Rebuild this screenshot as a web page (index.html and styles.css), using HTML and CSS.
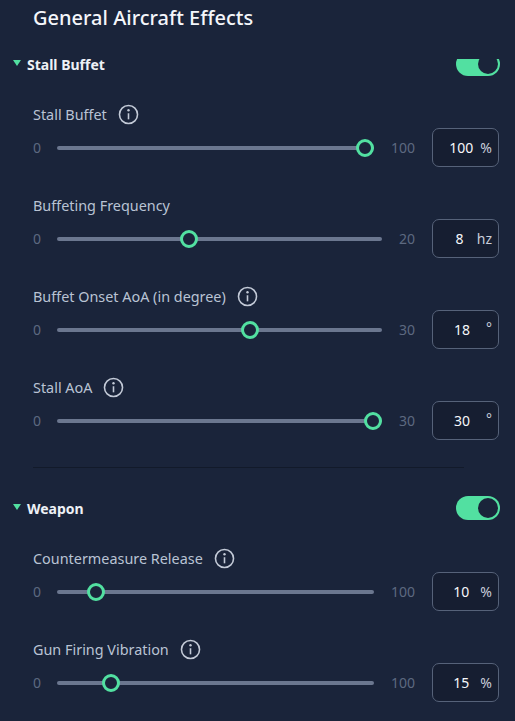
FILE: index.html
```html
<!DOCTYPE html>
<html>

<head>
    <title>General Aircraft Effects</title>
    <link rel="stylesheet" href="styles.css">
</head>

<body>
    <header class="title-bar">
        <h1>General Aircraft Effects</h1>
    </header>

    <main class="panel">
        <section class="group group-scrolled">
            <div class="group-head">
                <span class="caret"></span>
                <span class="group-name">Stall Buffet</span>
                <span class="toggle"><span class="knob"></span></span>
            </div>

            <div class="setting">
                <div class="setting-label">Stall Buffet
                    <svg class="info" viewBox="0 0 20 20"><circle cx="10" cy="10" r="8.6"/><line x1="10" y1="8.8" x2="10" y2="14.6"/><circle class="dot" cx="10" cy="5.9" r="1.15"/></svg>
                </div>
                <div class="setting-control">
                    <span class="bound">0</span>
                    <input class="slider" type="range" min="0" max="100" value="100">
                    <span class="bound">100</span>
                    <div class="value-box"><span class="value">100</span><span class="unit">%</span></div>
                </div>
            </div>

            <div class="setting">
                <div class="setting-label">Buffeting Frequency</div>
                <div class="setting-control">
                    <span class="bound">0</span>
                    <input class="slider" type="range" min="0" max="20" value="8">
                    <span class="bound">20</span>
                    <div class="value-box"><span class="value">8</span><span class="unit">hz</span></div>
                </div>
            </div>

            <div class="setting">
                <div class="setting-label">Buffet Onset AoA (in degree)
                    <svg class="info" viewBox="0 0 20 20"><circle cx="10" cy="10" r="8.6"/><line x1="10" y1="8.8" x2="10" y2="14.6"/><circle class="dot" cx="10" cy="5.9" r="1.15"/></svg>
                </div>
                <div class="setting-control">
                    <span class="bound">0</span>
                    <input class="slider" type="range" min="0" max="30" value="18">
                    <span class="bound">30</span>
                    <div class="value-box"><span class="value">18</span><span class="unit deg">°</span></div>
                </div>
            </div>

            <div class="setting">
                <div class="setting-label">Stall AoA
                    <svg class="info" viewBox="0 0 20 20"><circle cx="10" cy="10" r="8.6"/><line x1="10" y1="8.8" x2="10" y2="14.6"/><circle class="dot" cx="10" cy="5.9" r="1.15"/></svg>
                </div>
                <div class="setting-control">
                    <span class="bound">0</span>
                    <input class="slider" type="range" min="0" max="30" value="30">
                    <span class="bound">30</span>
                    <div class="value-box"><span class="value">30</span><span class="unit deg">°</span></div>
                </div>
            </div>
        </section>

        <hr class="divider">

        <section class="group">
            <div class="group-head">
                <span class="caret"></span>
                <span class="group-name">Weapon</span>
                <span class="toggle"><span class="knob"></span></span>
            </div>

            <div class="setting">
                <div class="setting-label">Countermeasure Release
                    <svg class="info" viewBox="0 0 20 20"><circle cx="10" cy="10" r="8.6"/><line x1="10" y1="8.8" x2="10" y2="14.6"/><circle class="dot" cx="10" cy="5.9" r="1.15"/></svg>
                </div>
                <div class="setting-control">
                    <span class="bound">0</span>
                    <input class="slider" type="range" min="0" max="100" value="10">
                    <span class="bound">100</span>
                    <div class="value-box"><span class="value">10</span><span class="unit">%</span></div>
                </div>
            </div>

            <div class="setting">
                <div class="setting-label">Gun Firing Vibration
                    <svg class="info" viewBox="0 0 20 20"><circle cx="10" cy="10" r="8.6"/><line x1="10" y1="8.8" x2="10" y2="14.6"/><circle class="dot" cx="10" cy="5.9" r="1.15"/></svg>
                </div>
                <div class="setting-control">
                    <span class="bound">0</span>
                    <input class="slider" type="range" min="0" max="100" value="15">
                    <span class="bound">100</span>
                    <div class="value-box"><span class="value">15</span><span class="unit">%</span></div>
                </div>
            </div>
        </section>
    </main>
</body>

</html>
```

FILE: styles.css
```css
html,
body {
    height: 100%;
    margin: 0;
    padding: 0;
}

body {
    background-color: #1a243a;
    font-family: "Noto Sans", "Open Sans", sans-serif;
    color: #b9c3d4;
    overflow: hidden;
}

/* title stays on top of the scrolled list */
.title-bar {
    height: 59px;
    padding: 0 33px;
    background-color: #1a243a;
    position: relative;
    z-index: 2;
}

.title-bar h1 {
    margin: 0;
    padding-top: 4px;
    font-size: 20px;
    font-weight: 500;
    line-height: 28px;
    color: #f4f6fa;
}

/* list is scrolled down a little, first header slides under the title */
.group-scrolled {
    margin-top: -7px;
}

.group-head {
    display: flex;
    align-items: center;
    height: 24px;
    padding: 0 15px 0 13px;
}

.caret {
    width: 0;
    height: 0;
    border-left: 4px solid transparent;
    border-right: 4px solid transparent;
    border-top: 6px solid #52e0a1;
    margin-right: 6px;
    margin-top: -2px;
    position: relative;
    z-index: 3;
}

.group-name {
    flex: 1;
    font-size: 14px;
    font-weight: 700;
    color: #eef1f6;
    position: relative;
    z-index: 3;
}

.toggle {
    width: 44px;
    height: 24px;
    border-radius: 12px;
    background-color: #52e0a1;
    display: flex;
    align-items: center;
    justify-content: flex-end;
    padding: 0 2px;
    box-sizing: border-box;
}

.toggle .knob {
    width: 20px;
    height: 20px;
    border-radius: 50%;
    background-color: #1a243a;
}

.setting {
    padding: 28px 16px 0 33px;
}

.setting-label {
    display: flex;
    align-items: center;
    height: 20px;
    font-size: 14.4px;
    color: #b9c3d4;
}

.info {
    width: 21px;
    height: 21px;
    margin-left: 11px;
    fill: none;
    stroke: #c3cad7;
    stroke-width: 1.5;
}

.info .dot {
    fill: #c3cad7;
    stroke: none;
}

.setting-control {
    display: flex;
    align-items: center;
    gap: 17px;
    height: 39px;
    margin-top: 4px;
}

.bound {
    font-size: 14px;
    color: #5d6980;
}

.slider {
    flex: 1;
    min-width: 0;
    margin: 0 0 0 -1px;
    height: 18px;
    -webkit-appearance: none;
    appearance: none;
    background: transparent;
}

.slider::-webkit-slider-runnable-track {
    height: 4px;
    border-radius: 2px;
    background-color: #6b778f;
}

.slider::-webkit-slider-thumb {
    -webkit-appearance: none;
    width: 18px;
    height: 18px;
    margin-top: -7px;
    border-radius: 50%;
    border: 3px solid #52e0a1;
    background-color: #1a243a;
    box-sizing: border-box;
}

.value-box {
    width: 67px;
    height: 39px;
    box-sizing: border-box;
    border: 1px solid #566279;
    border-radius: 7px;
    background-color: #161e31;
    display: flex;
    align-items: center;
    justify-content: space-between;
    padding: 0 6px 0 9px;
}

.value {
    width: 40px;
    text-align: center;
    font-size: 14px;
    color: #f6f8fb;
}

.unit {
    font-size: 14px;
    color: #c8cedb;
}

.unit.deg {
    align-self: flex-start;
    margin-top: 7px;
}

.divider {
    border: 0;
    border-top: 1px solid #121a2a;
    margin: 27px 51px 28px 33px;
}
```
